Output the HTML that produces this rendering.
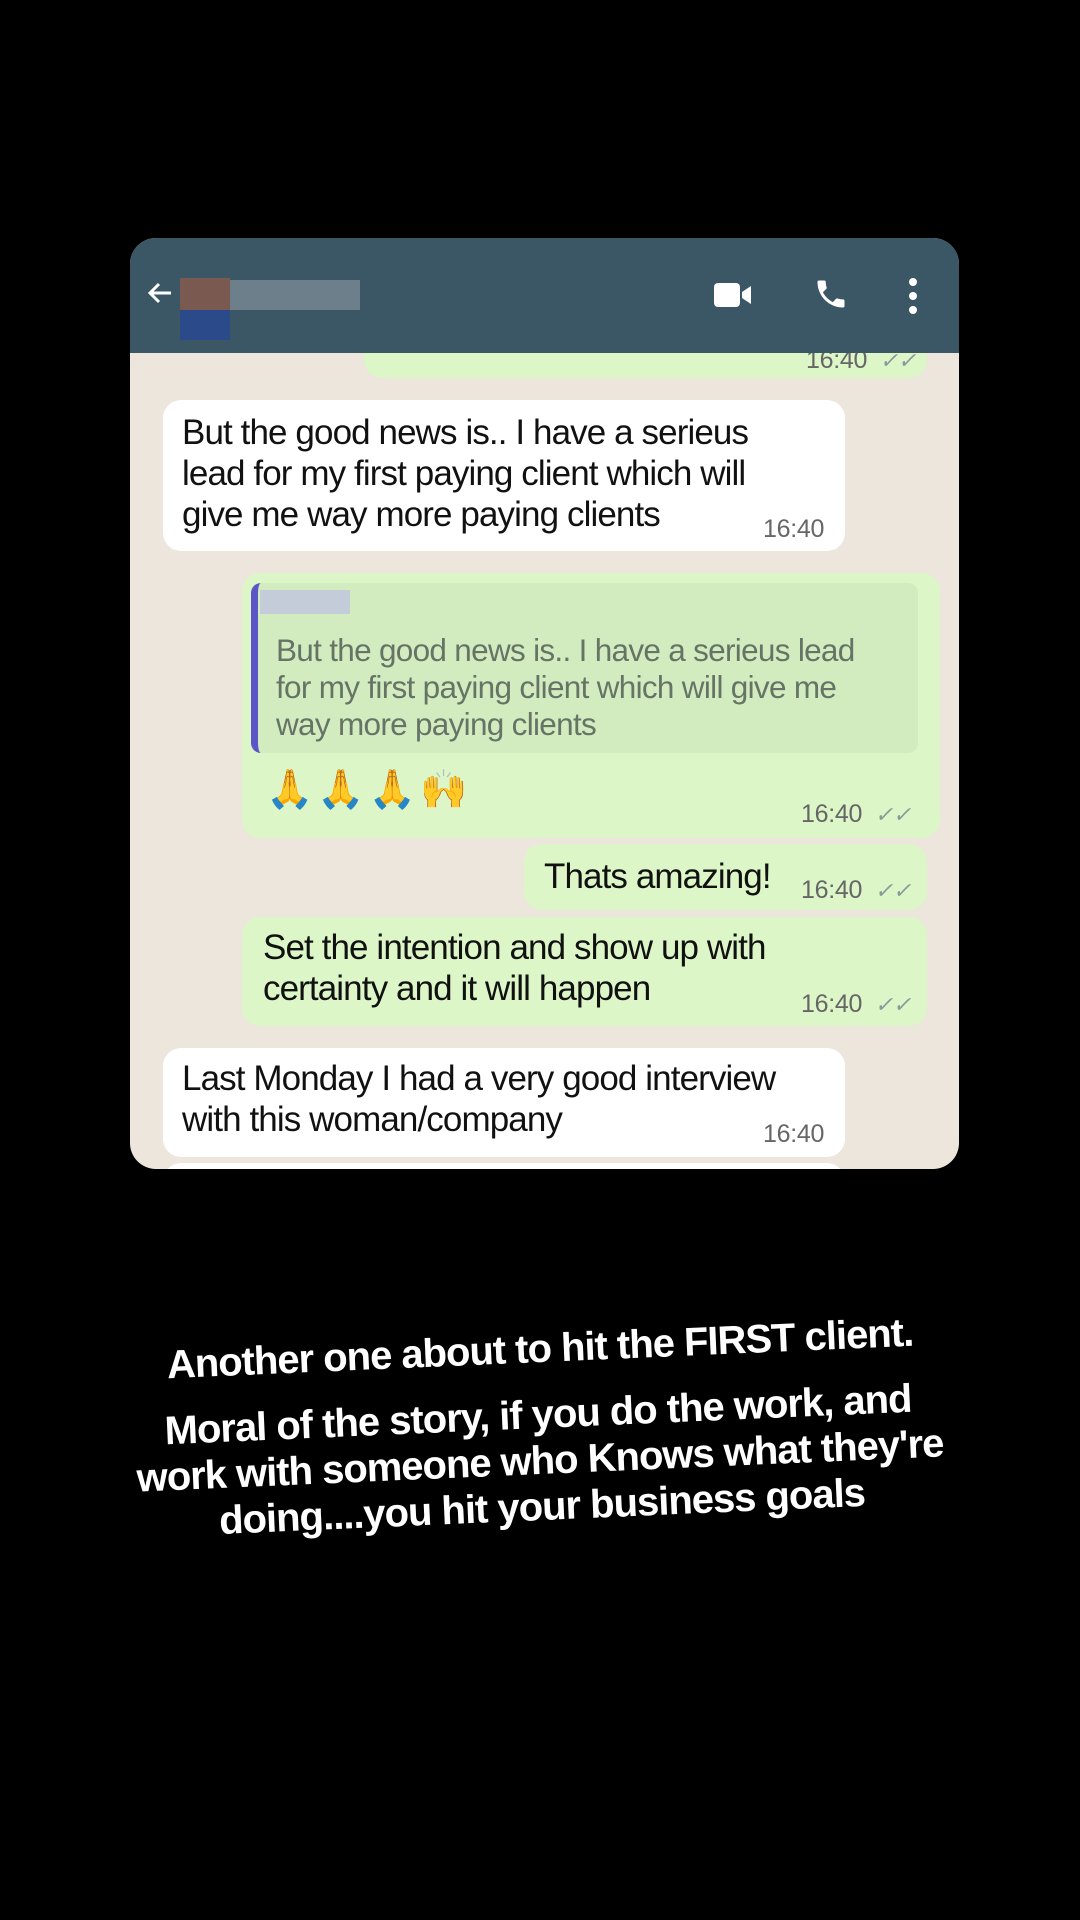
<!DOCTYPE html>
<html><head><meta charset="utf-8"><style>
*{margin:0;padding:0;box-sizing:border-box}
body{width:1080px;height:1920px;background:#000;position:relative;overflow:hidden;font-family:"Liberation Sans",sans-serif}
.card{position:absolute;left:130px;top:238px;width:829px;height:931px;border-radius:26px;overflow:hidden;background:#ece6dc}
.hdr{position:absolute;left:0;top:0;width:100%;height:115px;background:#3b5665}
.b{position:absolute;border-radius:18px;font-size:35px;letter-spacing:-0.9px;color:#111;line-height:41px}
.w{background:#fff}
.g{background:#dcf6c8}
.t{position:absolute;font-size:25px;color:#666;letter-spacing:-0.3px}
.ck{color:#8a9a9a;font-size:22px;margin-left:6px;font-style:italic}
.cap{position:absolute;left:0;width:1080px;text-align:center;color:#fff;font-weight:bold;font-size:40px;letter-spacing:-1px;line-height:46px;transform:rotate(-2.5deg)}
</style></head><body>
<div class="card">
  <div class="b g" style="left:234px;top:20px;width:563px;height:120px"></div>
  <div class="t" style="left:676px;top:108px">16:40 <span class="ck">✓✓</span></div>
  <div class="hdr">
    <svg style="position:absolute;left:15px;top:40px" width="30" height="30" viewBox="0 0 30 30"><path d="M26 15H5M14 6l-9 9 9 9" stroke="#fff" stroke-width="3" fill="none"/></svg>
    <div style="position:absolute;left:50px;top:40px;width:50px;height:32px;background:#7a5a50"></div>
    <div style="position:absolute;left:50px;top:72px;width:50px;height:30px;background:#2a4a8a"></div>
    <div style="position:absolute;left:100px;top:42px;width:130px;height:30px;background:#7a8a94;opacity:.8"></div>
    <svg style="position:absolute;left:584px;top:42px" width="40" height="30" viewBox="0 0 40 30"><rect x="0" y="3" width="26" height="24" rx="4" fill="#fff"/><path d="M28 12l9-6v18l-9-6z" fill="#fff"/></svg>
    <svg style="position:absolute;left:683px;top:38px" width="36" height="36" viewBox="0 0 24 24"><path d="M6.6 10.8c1.4 2.8 3.8 5.1 6.6 6.6l2.2-2.2c.3-.3.7-.4 1-.2 1.1.4 2.3.6 3.6.6.6 0 1 .4 1 1V20c0 .6-.4 1-1 1C10.6 21 3 13.4 3 4c0-.6.4-1 1-1h3.5c.6 0 1 .4 1 1 0 1.3.2 2.5.6 3.6.1.3 0 .7-.2 1z" fill="#fff"/></svg>
    <svg style="position:absolute;left:775px;top:38px" width="16" height="40" viewBox="0 0 16 40"><circle cx="8" cy="6" r="4" fill="#fff"/><circle cx="8" cy="20" r="4" fill="#fff"/><circle cx="8" cy="34" r="4" fill="#fff"/></svg>
  </div>
  <div class="b w" style="left:33px;top:162px;width:682px;height:151px;padding:12px 0 0 19px">But the good news is.. I have a serieus<br>lead for my first paying client which will<br>give me way more paying clients</div>
  <div class="t" style="left:633px;top:277px">16:40</div>

  <div class="b g" style="left:112px;top:335px;width:698px;height:265px"></div>
  <div style="position:absolute;left:121px;top:345px;width:667px;height:170px;background:#d2ecc0;border-radius:10px;border-left:7px solid #5b55c8"></div>
  <div style="position:absolute;left:130px;top:352px;width:90px;height:24px;background:#c3ccd8"></div>
  <div style="position:absolute;left:146px;top:394px;font-size:31.5px;letter-spacing:-0.7px;line-height:37px;color:#667466">But the good news is.. I have a serieus lead<br>for my first paying client which will give me<br>way more paying clients</div>
  <div style="position:absolute;left:136px;top:530px;font-size:38px;letter-spacing:4px">🙏🙏🙏🙌</div>
  <div class="t" style="left:671px;top:562px">16:40 <span class="ck">✓✓</span></div>

  <div class="b g" style="left:394px;top:606px;width:403px;height:66px;padding:12px 0 0 20px">Thats amazing!</div>
  <div class="t" style="left:671px;top:638px">16:40 <span class="ck">✓✓</span></div>

  <div class="b g" style="left:112px;top:679px;width:685px;height:109px;padding:10px 0 0 21px">Set the intention and show up with<br>certainty and it will happen</div>
  <div class="t" style="left:671px;top:752px">16:40 <span class="ck">✓✓</span></div>

  <div class="b w" style="left:33px;top:810px;width:682px;height:109px;padding:10px 0 0 19px">Last Monday I had a very good interview<br>with this woman/company</div>
  <div class="t" style="left:633px;top:882px">16:40</div>
  <div class="b w" style="left:33px;top:925px;width:682px;height:40px"></div>
</div>
<div class="cap" style="top:1326px">Another one about to hit the FIRST client.</div>
<div class="cap" style="top:1392px">Moral of the story, if you do the work, and<br>work with someone who Knows what they're<br>doing....you hit your business goals</div>
</body></html>
